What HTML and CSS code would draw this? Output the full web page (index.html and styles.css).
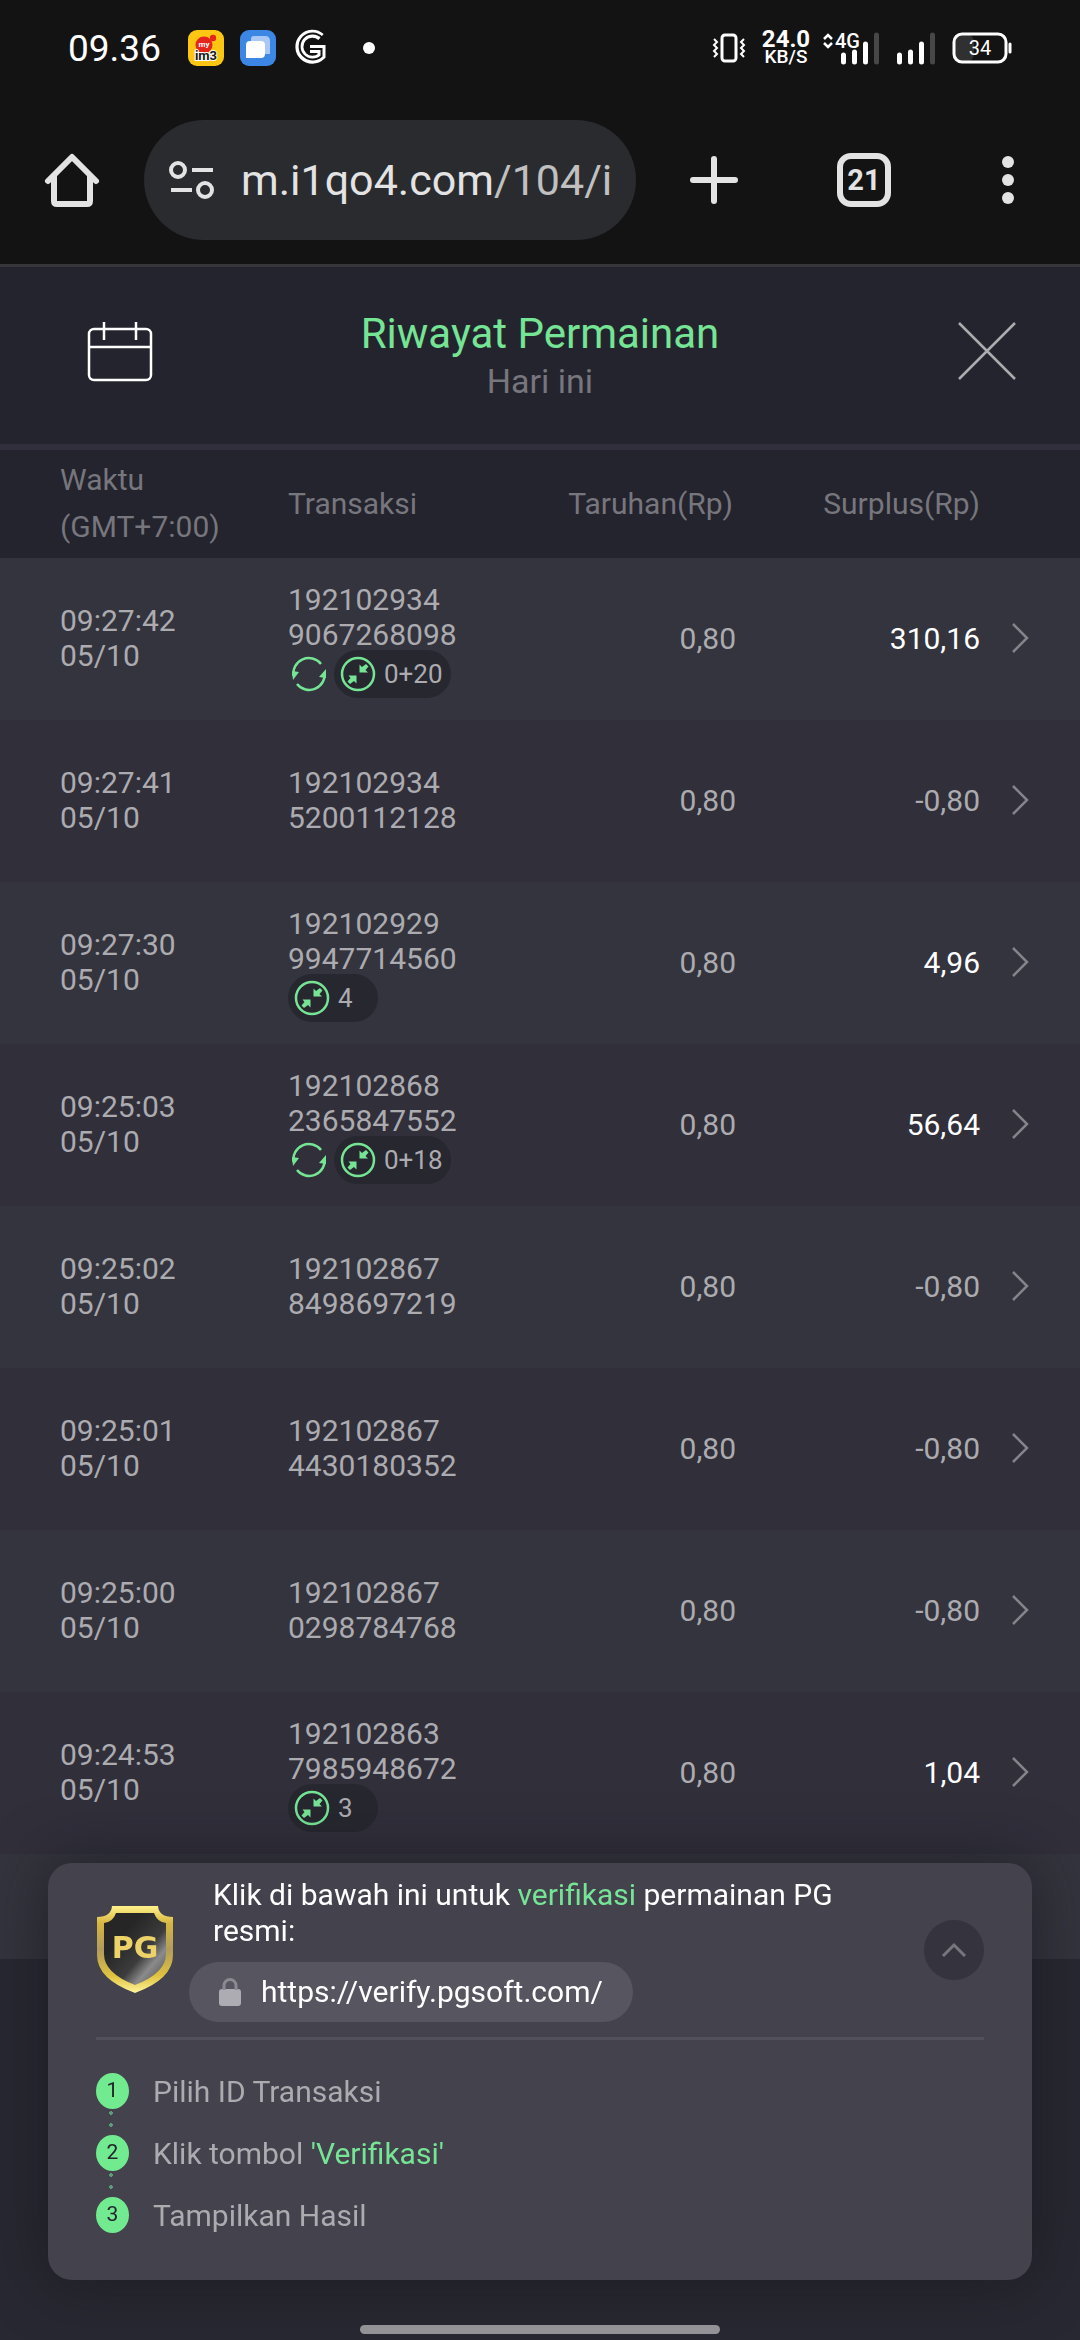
FILE: index.html
```html
<!DOCTYPE html>
<html lang="id">
<head>
<meta charset="utf-8">
<meta name="viewport" content="width=device-width, initial-scale=1">
<title>Riwayat Permainan</title>
<link rel="stylesheet" href="styles.css">
</head>
<body>
	<!-- shared icons -->
	<svg class="defs" width="0" height="0">
		<symbol id="i-spin" viewBox="0 0 36 36">
			<path d="M2.500 20A15.500 15.500 0 0 1 30 8M33.500 16A15.500 15.500 0 0 1 6 28" fill="none" stroke="#76e495" stroke-width="2.500"/>
			<path d="M1 15l7 1-6 8zM35 13v9l-7-1z" fill="#76e495"/>
		</symbol>
		<symbol id="i-free" viewBox="0 0 36 36">
			<circle cx="18" cy="18" r="16" fill="none" stroke="#76e495" stroke-width="2.500"/>
			<path d="M19.500 16.500v-8l2.500 2.500 4-3 2.500 2.500-3 3.500 2.500 2.500zM16.500 19.500v8L14 25l-4 3-2.500-2.500 3-3.500L8.500 19.500z" fill="#76e495"/>
		</symbol>
		<symbol id="i-next" viewBox="0 0 20 32">
			<path d="M2 2l14 14L2 30" fill="none" stroke="#85848b" stroke-width="2.500"/>
		</symbol>
	</svg>

	<header class="phone">
		<div class="status">
			<span class="clock">09.36</span>
			<svg class="apps" width="190" height="36" viewBox="0 0 190 36">
				<rect width="36" height="36" rx="9" fill="#fcc613"/>
				<circle cx="16" cy="15" r="8.500" fill="#e3251b"/>
				<circle cx="25" cy="8" r="3.200" fill="#e3251b"/>
				<text x="16" y="17" font-size="8" font-weight="700" fill="#fff" text-anchor="middle">my</text>
				<text x="18" y="30" font-size="13" font-weight="700" fill="#181818" stroke="#fff" stroke-width="2" paint-order="stroke" text-anchor="middle">im3</text>
				<rect x="52" width="36" height="36" rx="9" fill="#3c87e4"/>
				<path d="M66 6h11q5 0 5 5v13H63V9q0-3 3-3z" fill="#a9c8f5"/>
				<path d="M62 11h11q4 0 4 4v9q0 4-4 4H58V15q0-4 4-4z" fill="#fff"/>
				<path d="M133 7A13 13 0 1 0 133.500 26V19H122" fill="none" stroke="#fff" stroke-width="8"/>
				<path d="M134 7.500A13 13 0 1 0 133.500 26V19H121" fill="none" stroke="#131313" stroke-width="2"/>
				<circle cx="181" cy="18" r="6" fill="#fff"/>
			</svg>
			<svg class="vibrate" width="32" height="30" viewBox="0 0 32 30">
				<rect x="9" y="2" width="14" height="26" rx="3" fill="none" stroke="#fff" stroke-width="3"/>
				<path d="M1 6l3 3-3 3 3 3-3 3 3 3-3 3M31 6l-3 3 3 3-3 3 3 3-3 3 3 3" fill="none" stroke="#fff" stroke-width="2"/>
			</svg>
			<span class="speed"><b>24.0</b><small>KB/S</small></span>
			<svg class="signal" width="190" height="32" viewBox="0 0 190 32">
				<path d="M1 7l4-4 4 4M1 11l4 4 4-4" fill="none" stroke="#fff" stroke-width="2.500"/>
				<text x="12" y="16" font-size="20" font-weight="500" fill="#fff">4G</text>
				<path d="M20.500 23v7M31.500 20v10M42.500 12v18M76.500 23v7M87.500 20v10M98.500 12v18" stroke="#fff" stroke-width="5" stroke-linecap="round"/>
				<path d="M53.500 3v27M109.500 3v27" stroke="#474747" stroke-width="5" stroke-linecap="round"/>
				<rect x="131" y="2" width="20" height="28" rx="8" fill="#303030"/>
				<rect x="131" y="2" width="52" height="28" rx="8" fill="none" stroke="#fff" stroke-width="3"/>
				<path d="M187 12v8" stroke="#fff" stroke-width="3" stroke-linecap="round"/>
				<text x="157" y="23" font-size="20" fill="#fff" text-anchor="middle">34</text>
			</svg>
		</div>
		<nav class="browser">
			<button class="icon" aria-label="Home">
				<svg width="54" height="54" viewBox="0 0 54 54" fill="none" stroke="#e3e3e3" stroke-width="6" stroke-linejoin="round"><path d="M9 23v25q0 3 3 3h30q3 0 3-3V23"/><path d="M3 28L27 4l24 24" stroke-linecap="round"/></svg>
			</button>
			<a class="url" href="#">
				<svg width="46" height="40" viewBox="0 0 46 40" fill="none" stroke="#e3e3e3" stroke-width="4"><circle cx="9" cy="10" r="7"/><circle cx="36" cy="30" r="7"/><path d="M23 10h21M2 30h21"/></svg>
				<span>m.i1qo4.com<i>/104/i</i></span>
			</a>
			<button class="icon" aria-label="New tab">
				<svg width="54" height="54" viewBox="0 0 54 54"><path d="M27 6v42M6 27h42" stroke="#e3e3e3" stroke-width="6" stroke-linecap="round"/></svg>
			</button>
			<button class="icon tabs">21</button>
			<button class="icon" aria-label="Menu">
				<svg width="54" height="54" viewBox="0 0 54 54" fill="#e3e3e3"><circle cx="27" cy="9" r="6"/><circle cx="27" cy="27" r="6"/><circle cx="27" cy="45" r="6"/></svg>
			</button>
		</nav>
	</header>

	<section class="title">
		<button class="icon" aria-label="Kalender">
			<svg width="66" height="62" viewBox="0 0 66 62" fill="none" stroke="#fff" stroke-width="2.500"><rect x="2" y="9" width="62" height="51" rx="5"/><path d="M2 27h62M17 2v18M49 2v18"/></svg>
		</button>
		<div>
			<h1>Riwayat Permainan</h1>
			<p>Hari ini</p>
		</div>
		<button class="icon close" aria-label="Tutup">
			<svg width="58" height="58" viewBox="0 0 58 58"><path d="M1 1l56 56M57 1L1 57" stroke="#acacb0" stroke-width="2.500"/></svg>
		</button>
	</section>

	<table class="history">
		<thead>
			<tr><th class="time">Waktu<br>(GMT+7:00)</th><th class="id">Transaksi</th><th class="bet">Taruhan(Rp)</th><th class="win">Surplus(Rp)</th><th></th></tr>
		</thead>
		<tbody>
			<tr>
				<td class="time">09:27:42<br>05/10</td>
				<td class="id">192102934<br>9067268098<div class="tags"><svg><use href="#i-spin"/></svg><span class="tag"><svg><use href="#i-free"/></svg>0+20</span></div></td>
				<td class="bet">0,80</td><td class="win plus">310,16</td>
				<td class="go"><svg><use href="#i-next"/></svg></td>
			</tr>
			<tr>
				<td class="time">09:27:41<br>05/10</td>
				<td class="id">192102934<br>5200112128</td>
				<td class="bet">0,80</td><td class="win">-0,80</td>
				<td class="go"><svg><use href="#i-next"/></svg></td>
			</tr>
			<tr>
				<td class="time">09:27:30<br>05/10</td>
				<td class="id">192102929<br>9947714560<div class="tags"><span class="tag single"><svg><use href="#i-free"/></svg>4</span></div></td>
				<td class="bet">0,80</td><td class="win plus">4,96</td>
				<td class="go"><svg><use href="#i-next"/></svg></td>
			</tr>
			<tr>
				<td class="time">09:25:03<br>05/10</td>
				<td class="id">192102868<br>2365847552<div class="tags"><svg><use href="#i-spin"/></svg><span class="tag"><svg><use href="#i-free"/></svg>0+18</span></div></td>
				<td class="bet">0,80</td><td class="win plus">56,64</td>
				<td class="go"><svg><use href="#i-next"/></svg></td>
			</tr>
			<tr>
				<td class="time">09:25:02<br>05/10</td>
				<td class="id">192102867<br>8498697219</td>
				<td class="bet">0,80</td><td class="win">-0,80</td>
				<td class="go"><svg><use href="#i-next"/></svg></td>
			</tr>
			<tr>
				<td class="time">09:25:01<br>05/10</td>
				<td class="id">192102867<br>4430180352</td>
				<td class="bet">0,80</td><td class="win">-0,80</td>
				<td class="go"><svg><use href="#i-next"/></svg></td>
			</tr>
			<tr>
				<td class="time">09:25:00<br>05/10</td>
				<td class="id">192102867<br>0298784768</td>
				<td class="bet">0,80</td><td class="win">-0,80</td>
				<td class="go"><svg><use href="#i-next"/></svg></td>
			</tr>
			<tr>
				<td class="time">09:24:53<br>05/10</td>
				<td class="id">192102863<br>7985948672<div class="tags"><span class="tag single"><svg><use href="#i-free"/></svg>3</span></div></td>
				<td class="bet">0,80</td><td class="win plus">1,04</td>
				<td class="go"><svg><use href="#i-next"/></svg></td>
			</tr>
		</tbody>
		<tfoot>
			<tr><td colspan="5"></td></tr>
		</tfoot>
	</table>

	<aside class="verify">
		<div class="top">
			<svg class="shield" width="78" height="90" viewBox="0 0 78 90">
				<defs>
					<linearGradient id="gold" x1="0" y1="0" x2="0" y2="1"><stop offset="0" stop-color="#fff28a"/><stop offset=".2" stop-color="#d6b63f"/><stop offset=".5" stop-color="#b29c5c"/><stop offset=".8" stop-color="#e0c23f"/><stop offset="1" stop-color="#fff59a"/></linearGradient>
					<linearGradient id="dark" x1="0" y1="0" x2="1" y2="1"><stop offset=".3" stop-color="#262626"/><stop offset=".6" stop-color="#3c3c3c"/><stop offset=".75" stop-color="#8b8b8b"/><stop offset="1" stop-color="#444"/></linearGradient>
				</defs>
				<path d="M16 1h46q1 11 15 11v38q0 24-38 38Q1 74 1 50V12q14 0 15-11z" fill="url(#gold)"/>
				<path d="M20 8h38q3 9 12 10v31q0 19-31 31Q8 68 8 49V18q9-1 12-10z" fill="url(#dark)"/>
				<text class="pg" x="39" y="53" text-anchor="middle">PG</text>
			</svg>
			<div class="info">
				<p>Klik di bawah ini untuk <em>verifikasi</em> permainan PG resmi:</p>
				<a href="https://verify.pgsoft.com/"><svg width="22" height="28" viewBox="0 0 22 28"><rect y="11" width="22" height="17" rx="3" fill="#adacb3"/><path d="M5 12V7.500a6 6 0 0 1 12 0V12" fill="none" stroke="#8b8a92" stroke-width="3"/></svg>https://verify.pgsoft.com/</a>
			</div>
			<button class="fold" aria-label="Tutup panel">
				<svg width="24" height="16" viewBox="0 0 24 16"><path d="M1 14L12 3l11 11" fill="none" stroke="#77767e" stroke-width="3"/></svg>
			</button>
		</div>
		<ol>
			<li><b>1</b>Pilih ID Transaksi</li>
			<li><b>2</b><span>Klik tombol <em>'Verifikasi'</em></span></li>
			<li><b>3</b>Tampilkan Hasil</li>
		</ol>
	</aside>
	<div class="handle"></div>
</body>
</html>
```
FILE: styles.css
```css
* {
  box-sizing: border-box;
}
body {
  margin: 0;
  min-height: 100vh;
  background: #282832;
  color: #acabb0;
  font: 30px/35px Roboto, sans-serif;
}
h1, p, ol {
  margin: 0;
  padding: 0;
  font-weight: 400;
}
button {
  border: 0;
  padding: 0;
  background: none;
  font-family: inherit;
}
svg {
  display: block;
  flex: none;
  overflow: visible;
}
a {
  color: inherit;
  text-decoration: none;
}
em {
  font-style: normal;
  color: #76e495;
}
.defs {
  position: absolute;
}

/* status bar + browser bar */
.phone {
  height: 267px;
  background: #131313;
  border-bottom: 3px solid #37373b;
}
.status {
  display: flex;
  align-items: center;
  height: 96px;
  padding: 0 67px 0 68px;
  color: #fff;
}
.clock {
  font-size: 37px;
  width: 120px;
}
.apps {
  margin-right: auto;
}
.speed {
  display: flex;
  flex-direction: column;
  align-items: center;
  width: 50px;
  margin: 0 12px 0 16px;
}
.speed b {
  font-size: 24px;
  line-height: 18px;
}
.speed small {
  font-size: 19px;
  line-height: 18px;
  font-weight: 500;
}
.browser {
  display: flex;
  align-items: center;
  padding: 24px 45px;
  gap: 45px;
}
.icon {
  flex: none;
  display: flex;
  align-items: center;
  justify-content: center;
}
.url {
  flex: 1;
  display: flex;
  align-items: center;
  gap: 26px;
  height: 120px;
  margin-right: 6px;
  padding-left: 25px;
  border-radius: 60px;
  background: #2a2b2f;
  color: #e3e3e3;
  font-size: 43px;
}
.url i {
  font-style: normal;
  color: #c0c0c0;
}
.tabs {
  width: 54px;
  height: 54px;
  margin: 0 45px 0 51px;
  border: 6px solid #e3e3e3;
  border-radius: 14px;
  color: #e3e3e3;
  font-size: 29px;
  font-weight: 700;
}

/* page title */
.title {
  display: grid;
  grid-template-columns: 112px 1fr 112px;
  align-items: center;
  height: 183px;
  padding: 0 64px;
  background: #24242e;
  border-bottom: 6px solid #302f3b;
  text-align: center;
}
.title .icon {
  margin-bottom: 10px;
}
.title .close {
  justify-content: flex-end;
}
.title h1 {
  color: #76e495;
  font-size: 42px;
  line-height: 50px;
}
.title p {
  color: #77767d;
  font-size: 34px;
  line-height: 44px;
}

/* transactions */
.history {
  width: 100%;
  border-collapse: collapse;
  table-layout: fixed;
}
.history th, .history td {
  padding: 0 0 2px;
  text-align: left;
  font-weight: 400;
}
.history thead tr {
  height: 108px;
  background: #24242e;
  color: #77767d;
  line-height: 47px;
}
.history tbody tr {
  height: 162px;
  background: #302f3a;
}
.history tbody tr:nth-child(odd) {
  background: #34343e;
}
.history tfoot tr {
  height: 105px;
  background: #34343e;
}
.history .time {
  width: 288px;
  padding-left: 60px;
}
.history .id {
  width: 220px;
}
.history .bet, .history .win {
  text-align: right;
}
.history .bet {
  width: 228px;
}
.history th.bet {
  padding-right: 3px;
}
.history .win {
  width: 244px;
}
.history .plus {
  color: #fff;
}
.go svg {
  width: 20px;
  height: 32px;
  margin-left: 31px;
}
.tags {
  display: flex;
  align-items: center;
  gap: 7px;
  margin: -2px 0 -4px;
}
.tags svg {
  width: 36px;
  height: 36px;
  margin-left: 3px;
}
.tag {
  display: flex;
  align-items: center;
  gap: 8px;
  height: 48px;
  padding: 0 8px 0 3px;
  border-radius: 24px;
  background: #27272f;
  font-size: 26px;
}
.single {
  min-width: 90px;
}

/* verification panel */
.verify {
  position: fixed;
  left: 48px;
  right: 48px;
  bottom: 60px;
  padding: 14px 48px 47px;
  border-radius: 24px;
  background: #43424d;
  box-shadow: 0 0 60px rgba(20, 20, 26, .6);
}
.top {
  display: flex;
  align-items: center;
  padding-bottom: 15px;
  border-bottom: 3px solid #51505b;
}
.pg {
  font: 700 30px "DejaVu Sans", sans-serif;
  fill: #ecd268;
}
.info {
  flex: 1;
  margin-left: 15px;
  color: #fff;
  line-height: 36px;
}
.info p {
  max-width: 680px;
  margin-bottom: 13px;
  padding-left: 24px;
}
.info a {
  display: inline-flex;
  align-items: center;
  gap: 20px;
  height: 60px;
  padding: 0 30px;
  border-radius: 30px;
  background: #565560;
  vertical-align: top;
}
.fold {
  display: flex;
  align-items: center;
  justify-content: center;
  width: 60px;
  height: 60px;
  border-radius: 50%;
  background: #34333e;
}
.verify ol {
  display: flex;
  flex-direction: column;
  gap: 26px;
  margin-top: 33px;
  list-style: none;
}
.verify li {
  position: relative;
  display: flex;
  align-items: center;
  gap: 24px;
  height: 36px;
}
.verify li b {
  width: 33px;
  height: 36px;
  border-radius: 50%;
  background: #72ea8f;
  color: #24242e;
  font-size: 21px;
  font-weight: 400;
  text-align: center;
}
/* dotted line between steps */
.verify li + li::before {
  content: "";
  position: absolute;
  left: 13px;
  bottom: 44px;
  width: 4px;
  height: 16px;
  background: radial-gradient(circle closest-side, #5f9a7a 90%, transparent) 0 0 / 4px 4px no-repeat, radial-gradient(circle closest-side, #5f9a7a 90%, transparent) 0 100% / 4px 4px no-repeat;
}
.handle {
  position: fixed;
  left: 33.333%;
  right: 33.333%;
  bottom: 6px;
  height: 9px;
  border-radius: 5px;
  background: #939296;
}
```
